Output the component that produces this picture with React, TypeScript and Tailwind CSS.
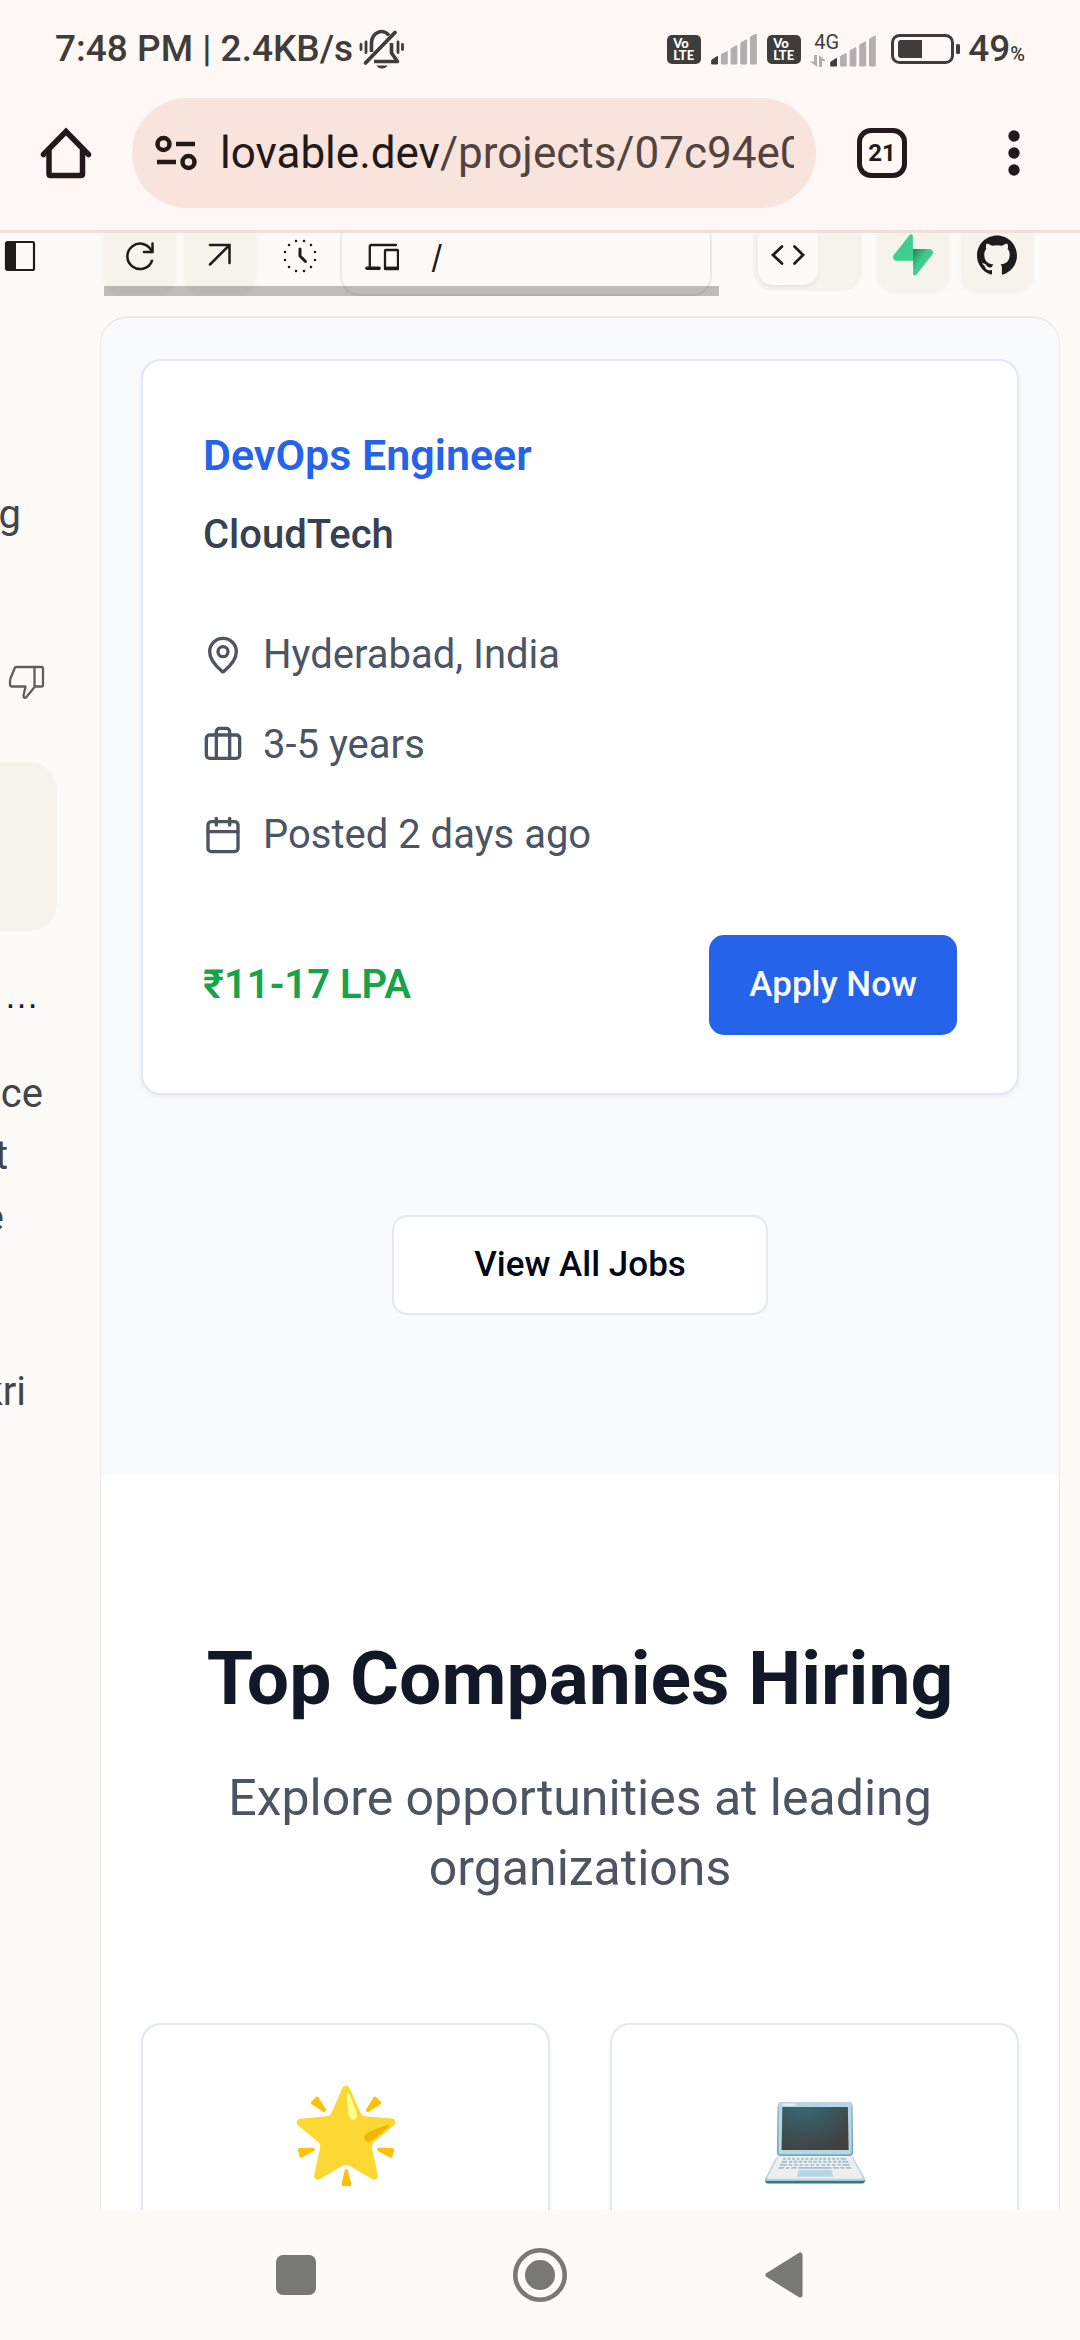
import type { ReactNode } from "react";
import { Calendar, MapPin } from "lucide-react";
import { SiGithub } from "react-icons/si";

const SIGNAL_BARS = [
  "M0 31V27L6 23V31Z",
  "M10 31V21L16 18V31Z",
  "M20 31V15L26 12V31Z",
  "M30 31V9L36 6V31Z",
  "M40 31V3L46 0V31Z",
];

function Signal() {
  return (
    <svg width="48" height="32" viewBox="-1 -1 48 33" aria-hidden="true">
      {SIGNAL_BARS.map((d, i) => (
        <path
          key={d}
          d={d}
          fill={i === 0 ? "#3e3d3b" : "#b3aeab"}
          stroke={i === 0 ? "#3e3d3b" : "#b3aeab"}
          strokeWidth="1"
          strokeLinejoin="round"
        />
      ))}
    </svg>
  );
}

function VoLte() {
  return (
    <span className="flex h-[29px] w-[34px] flex-col items-start justify-center rounded-[5px] bg-[#3e3d3b] pl-[6px] font-['Lato',sans-serif] text-[13px] leading-[12px] font-black text-white">
      <span>Vo</span>
      <span>LTE</span>
    </span>
  );
}

function BellOff() {
  return (
    <svg width="46" height="40" viewBox="0 0 46 40" fill="none" stroke="#3e3d3b" aria-hidden="true">
      <path d="M12.500 23V14A10 11.500 0 0 1 30 6.500" strokeWidth="3.600" />
      <path d="M32.500 14V24L38.500 32.500H15" strokeWidth="3.600" strokeLinejoin="round" />
      <path d="M6.500 34L36 3.500" strokeWidth="3.800" strokeLinecap="round" />
      <path d="M17.500 36.500H28.500A6 5 0 0 1 17.500 36.500Z" fill="#3e3d3b" stroke="none" />
      <path d="M2 15.500V20.500M7 13V23.500M39 13V23.500M43.500 15.500V20.500" strokeWidth="2.800" strokeLinecap="round" />
    </svg>
  );
}

function Battery() {
  return (
    <svg width="70" height="30" viewBox="0 0 70 30" aria-hidden="true">
      <rect x="1.500" y="1.500" width="60" height="27" rx="7" fill="none" stroke="#3e3d3b" strokeWidth="3" />
      <path d="M10 6H31V24H10Q7 24 7 21V9Q7 6 10 6Z" fill="#3e3d3b" />
      <rect x="65" y="10" width="4" height="10" rx="1.500" fill="#3e3d3b" />
    </svg>
  );
}

function StatusBar() {
  return (
    <div className="flex h-[98px] shrink-0 items-center justify-between pr-[55px] pl-[55px] text-[37px] leading-[40px] font-medium text-[#3e3d3b]">
      <div className="flex items-center gap-[6px]">
        <span>7:48 PM | 2.4KB/s</span>
        <BellOff />
      </div>
      <div className="flex items-center gap-[9px]">
        <VoLte />
        <Signal />
        <VoLte />
        <div className="flex items-end">
          <div className="flex w-[19px] flex-col items-start gap-[3px]">
            <span className="pl-[4px] text-[20px] leading-[20px] font-normal">4G</span>
            <svg width="16" height="12" viewBox="0 0 16 12" fill="#b3aeab" aria-hidden="true">
              <path d="M4 0H7V12L0 6.500H4ZM9 0L16 6H12V12H9Z" />
            </svg>
          </div>
          <Signal />
        </div>
        <div className="flex items-center gap-[7px] pl-[5px]">
          <Battery />
          <span className="flex items-baseline">
            49<span className="text-[20px] leading-[20px]">%</span>
          </span>
        </div>
      </div>
    </div>
  );
}

function BrowserBar() {
  return (
    <div className="flex h-[135px] shrink-0 items-start border-b-[3px] border-[#f3dfda] pr-[60px] pl-[40px] text-[#231918]">
      <button type="button" aria-label="Home" className="mr-[40px] flex h-[110px] items-center">
        <svg width="52" height="52" viewBox="0 0 52 52" fill="none" stroke="currentColor" strokeWidth="5.500">
          <path d="M9 23V47Q9 48.500 10.500 48.500H41Q42.500 48.500 42.500 47V23" />
          <path d="M3.500 27.500L26 4.500L48.500 27.500" strokeLinecap="round" />
        </svg>
      </button>
      <button
        type="button"
        aria-label="Address bar"
        className="flex h-[110px] min-w-0 flex-1 items-center gap-[20px] rounded-full bg-[#f9e3dd] pr-[22px] pl-[22px] text-left"
      >
        <svg width="46" height="38" viewBox="0 0 46 38" fill="none" stroke="currentColor" strokeWidth="4.500" className="shrink-0" aria-hidden="true">
          <circle cx="9.500" cy="10" r="6" />
          <path d="M22 10H41M3 28H22" />
          <circle cx="34.500" cy="28" r="6" />
        </svg>
        <span className="min-w-0 flex-1 overflow-hidden text-[44px] leading-[60px] whitespace-nowrap">
          lovable.dev<span className="text-[#534340]">/projects/07c94e0</span>
        </span>
      </button>
      <button type="button" aria-label="Tabs" className="ml-[41px] flex h-[110px] items-center">
        <span className="flex size-[50px] items-center justify-center rounded-[14px] border-[5px] border-[#231918] text-[24px] leading-[28px] font-bold">
          21
        </span>
      </button>
      <button type="button" aria-label="More" className="ml-[101px] flex h-[110px] items-center">
        <svg width="12" height="46" viewBox="0 0 12 46" fill="currentColor">
          <circle cx="6" cy="6" r="5.700" />
          <circle cx="6" cy="23" r="5.700" />
          <circle cx="6" cy="40" r="5.700" />
        </svg>
      </button>
    </div>
  );
}

function ToolButton({ label, plain, children }: { label: string; plain?: boolean; children: ReactNode }) {
  return (
    <button
      type="button"
      aria-label={label}
      className={
        plain
          ? "flex size-[72px] shrink-0 items-center justify-center"
          : "flex size-[72px] shrink-0 items-center justify-center rounded-[16px] bg-[#f6f3ed] shadow-[0_2px_4px_rgba(0,0,0,0.04)]"
      }
    >
      {children}
    </button>
  );
}

const DOTS = Array.from({ length: 12 }, (_, i) => {
  const a = ((15 + i * 30) * Math.PI) / 180;
  return { x: 17 + 15.5 * Math.cos(a), y: 17 + 15.5 * Math.sin(a) };
});

function Toolbar() {
  return (
    <div className="flex h-[63px] shrink-0 items-end overflow-hidden pr-[47px] pl-[4px] text-[#1c1c1c]">
      <div className="relative flex min-w-0 flex-1 items-end pr-[7px]">
        <div className="flex gap-[8px] pb-[4px]">
          <ToolButton label="Reload">
            <svg width="32" height="32" viewBox="0 0 32 32" fill="none" stroke="currentColor" strokeWidth="2.500" strokeLinecap="round" strokeLinejoin="round">
              <path d="M28 20.700A12.700 12.700 0 1 1 28 12" />
              <path d="M28.500 3.500V12H20" />
            </svg>
          </ToolButton>
          <ToolButton label="Open in new tab">
            <svg width="32" height="32" viewBox="0 0 32 32" fill="none" stroke="currentColor" strokeWidth="2.500" strokeLinecap="round">
              <path d="M6 5H25.500V23M25 5.500L6 24.500" />
            </svg>
          </ToolButton>
          <ToolButton label="History" plain>
            <svg width="34" height="34" viewBox="0 0 34 34" fill="none" stroke="currentColor">
              {DOTS.map((p, i) => (
                <circle key={i} cx={p.x} cy={p.y} r="1.300" fill="currentColor" stroke="none" />
              ))}
              <path d="M17 10V17L22.500 22.500" strokeWidth="3" strokeLinecap="round" strokeLinejoin="round" />
            </svg>
          </ToolButton>
        </div>
        <div className="ml-[4px] flex h-[78px] min-w-0 flex-1 items-center gap-[32px] rounded-[20px] border-2 border-[#eceae4] pl-[23px]">
          <svg width="34" height="28" viewBox="0 0 34 28" fill="none" stroke="currentColor" strokeWidth="2.300" className="shrink-0" aria-hidden="true">
            <path d="M4.800 25V3.500Q4.800 2 6.300 2H31" strokeLinecap="round" />
            <path d="M2 25.300H14" strokeWidth="3.600" strokeLinecap="round" />
            <rect x="20" y="7" width="13" height="19" rx="0.800" />
            <path d="M19 25.300H34" strokeWidth="3.400" />
          </svg>
          <input aria-label="Preview path" defaultValue="/" className="w-full min-w-0 bg-transparent font-['Inter',sans-serif] text-[32px] leading-[36px] outline-none" />
        </div>
        <div className="absolute inset-x-0 bottom-0 h-[10px] bg-black/25" />
      </div>
      <div className="ml-[34px] flex items-end gap-[15px] pb-[5px]">
        <div className="flex h-[72px] w-[109px] items-center rounded-[20px] bg-[#f6f3ed] pl-[5px]">
          <button type="button" aria-label="Code" className="flex size-[60px] items-center justify-center rounded-[15px] bg-[#fcfbf8] shadow-[0_2px_4px_rgba(0,0,0,0.06)]">
            <svg width="36" height="24" viewBox="0 0 36 24" fill="none" stroke="currentColor" strokeWidth="2.800" strokeLinecap="round">
              <path d="M12 3.500L3 12L12 20.500M24.500 3.500L33 12L24.500 20.500" />
            </svg>
          </button>
        </div>
        <div className="flex gap-[12px]">
          <ToolButton label="Supabase">
            <svg width="40" height="42" viewBox="0 0 109 113">
              <defs>
                <linearGradient id="bolt" x1="54" y1="40" x2="84" y2="62" gradientUnits="userSpaceOnUse">
                  <stop stopColor="#1f7f53" />
                  <stop offset="1" stopColor="#3ecf8e" />
                </linearGradient>
              </defs>
              <path d="M63.708 110.284C60.848 113.885 55.050 111.912 54.981 107.314L53.974 40.063H99.194C107.384 40.063 111.952 49.523 106.859 55.937Z" fill="url(#bolt)" />
              <path d="M45.317 2.071C48.177 -1.530 53.975 0.443 54.043 5.041L54.485 72.292H9.831C1.640 72.292 -2.928 62.832 2.166 56.418Z" fill="#3ecf8e" />
            </svg>
          </ToolButton>
          <ToolButton label="GitHub">
            <SiGithub size={40} />
          </ToolButton>
        </div>
      </div>
    </div>
  );
}

function ChatLine({ children }: { children: ReactNode }) {
  return <p className="flex justify-end text-[40px] leading-[62px] text-[#44454a]">{children}</p>;
}

function ChatColumn() {
  return (
    <aside className="flex w-[100px] shrink-0 flex-col items-start overflow-hidden pt-[7px]">
      <button type="button" aria-label="Toggle sidebar" className="ml-[4px] text-[#1c1c1c]">
        <svg width="32" height="32" viewBox="0 0 32 32">
          <rect x="2" y="2" width="28" height="28" rx="1.500" fill="none" stroke="currentColor" strokeWidth="2.200" />
          <rect x="2" y="2" width="10" height="28" fill="currentColor" />
        </svg>
      </button>
      <div className="mt-[212px] w-[21px]">
        <ChatLine>g</ChatLine>
      </div>
      <button type="button" aria-label="Dislike" className="mt-[118px] ml-[8px] text-[#5f5f5d]">
        <svg width="38" height="36" viewBox="0 0 38 36" fill="none" stroke="currentColor" strokeWidth="2.300" strokeLinejoin="round">
          <path d="M8.500 3H33.500Q35 3 35 4.500V21Q35 22.500 33.500 22.500H27L18 33.500Q15.500 34.500 15.500 31.500L17.500 22.500H4Q2 22.500 2 20.500V17.500Q2 16 2.500 14.500L6.500 4.500Q7 3 8.500 3Z" />
          <path d="M26.500 3V22.500" />
        </svg>
      </button>
      <div className="mt-[62px] h-[169px] w-[57px] rounded-r-[28px] bg-[#f6f3ed]" />
      <p className="mt-[50px] ml-[4px] font-['Liberation_Sans',sans-serif] text-[35px] leading-[30px] text-[#1c1c1c]">…</p>
      <div className="mt-[52px] w-[43px]">
        <ChatLine>ce</ChatLine>
      </div>
      <div className="w-[8px]">
        <ChatLine>t</ChatLine>
      </div>
      <div className="w-[4px]">
        <ChatLine>e</ChatLine>
      </div>
      <div className="mt-[112px] w-[26px]">
        <ChatLine>kri</ChatLine>
      </div>
    </aside>
  );
}

function Briefcase() {
  return (
    <svg width="40" height="40" viewBox="0 0 24 24" fill="none" stroke="currentColor" strokeWidth="2" strokeLinecap="round" strokeLinejoin="round" aria-hidden="true">
      <rect x="2" y="6" width="20" height="14" rx="2" />
      <path d="M16 20V4a2 2 0 0 0-2-2h-4a2 2 0 0 0-2 2v16" />
    </svg>
  );
}

function Detail({ icon, children }: { icon: ReactNode; children: ReactNode }) {
  return (
    <li className="flex items-center gap-[20px]">
      {icon}
      <span>{children}</span>
    </li>
  );
}

function JobCard() {
  return (
    <article className="rounded-[20px] border-2 border-[#e2e8f0] bg-white px-[60px] pt-[59px] pb-[58px] shadow-[0_2px_5px_rgba(0,0,0,0.06)]">
      <h3 className="text-[43px] leading-[70px] font-semibold text-[#2563eb]">DevOps Engineer</h3>
      <p className="mt-[15px] text-[40px] leading-[60px] font-medium text-[#374151]">CloudTech</p>
      <ul className="mt-[60px] flex flex-col gap-[30px] text-[40px] leading-[60px] text-[#4b5563]">
        <Detail icon={<MapPin size={40} />}>Hyderabad, India</Detail>
        <Detail icon={<Briefcase />}>3-5 years</Detail>
        <Detail icon={<Calendar size={40} />}>Posted 2 days ago</Detail>
      </ul>
      <div className="mt-[70px] flex items-center justify-between">
        <span className="text-[40px] leading-[60px] font-semibold text-[#16a34a]">₹11-17 LPA</span>
        <button type="button" className="h-[100px] rounded-[15px] bg-[#2563eb] px-[40px] text-[35px] leading-[50px] font-medium text-[#f8fafc]">
          Apply Now
        </button>
      </div>
    </article>
  );
}

function CompanyCard({ emoji }: { emoji: string }) {
  return (
    <div className="h-[400px] rounded-[20px] border-2 border-[#e2e8f0] bg-white pt-[60px] text-center text-[90px] leading-[100px] shadow-[0_2px_5px_rgba(0,0,0,0.06)]">
      {emoji}
    </div>
  );
}

export default function App() {
  return (
    <div className="flex h-screen flex-col overflow-hidden bg-[#fcfbf8] font-['Roboto',sans-serif]">
      <header className="shrink-0 bg-[#fff8f5]">
        <StatusBar />
        <BrowserBar />
      </header>
      <main className="flex min-h-0 flex-1 overflow-hidden">
        <ChatColumn />
        <div className="flex min-w-0 flex-1 flex-col overflow-hidden">
          <Toolbar />
          <div className="mt-[20px] mr-[20px] min-h-0 flex-1 overflow-hidden rounded-t-[28px] border-x-[1px] border-t-[2px] border-[#eceae4] bg-white">
            <section className="bg-[#f9fafc] px-[40px] pt-[41px] pb-[160px]">
              <JobCard />
              <div className="mt-[120px] flex justify-center">
                <button type="button" className="h-[100px] rounded-[15px] border-2 border-[#e2e8f0] bg-white px-[80px] text-[35px] leading-[50px] font-medium text-[#020817]">
                  View All Jobs
                </button>
              </div>
            </section>
            <section className="px-[40px] pt-[158px]">
              <h2 className="text-center text-[75px] leading-[90px] font-bold text-[#111827]">Top Companies Hiring</h2>
              <p className="mt-[40px] text-center text-[50px] leading-[70px] text-[#4b5563]">
                Explore opportunities at leading organizations
              </p>
              <div className="mt-[120px] grid grid-cols-2 gap-[60px]">
                <CompanyCard emoji="🌟" />
                <CompanyCard emoji="💻" />
              </div>
            </section>
          </div>
        </div>
      </main>
      <nav className="flex h-[130px] shrink-0 items-center justify-center gap-[190px] bg-[#fcfbf8] text-[#787876]">
        <button type="button" aria-label="Recent apps" className="flex w-[54px] justify-center">
          <span className="size-[40px] rounded-[7px] bg-[#787876]" />
        </button>
        <button type="button" aria-label="Home screen">
          <svg width="54" height="54" viewBox="0 0 54 54" fill="currentColor">
            <circle cx="27" cy="27" r="24.700" fill="none" stroke="currentColor" strokeWidth="4.600" />
            <circle cx="27" cy="27" r="15" />
          </svg>
        </button>
        <button type="button" aria-label="Back" className="flex w-[54px] justify-center">
          <svg width="38" height="46" viewBox="0 0 38 46" fill="currentColor" stroke="currentColor" strokeWidth="5" strokeLinejoin="round">
            <path d="M3 23L35 3V43Z" />
          </svg>
        </button>
      </nav>
    </div>
  );
}
